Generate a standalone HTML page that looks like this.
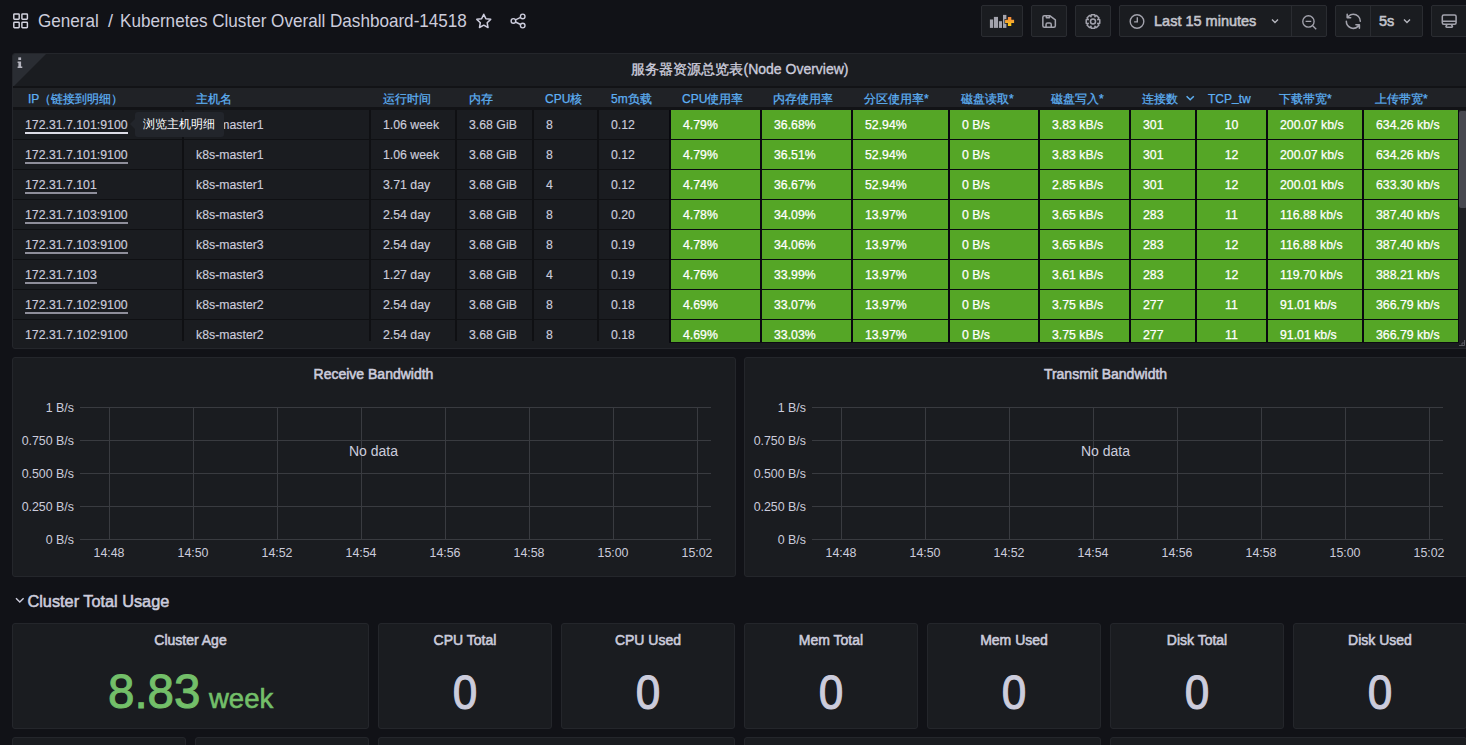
<!DOCTYPE html>
<html><head><meta charset="utf-8">
<style>
*{box-sizing:border-box;margin:0;padding:0}
html,body{width:1466px;height:745px;overflow:hidden;background:#111217;font-family:"Liberation Sans",sans-serif;color:#ccccdc}
.a{position:absolute}
.panel{position:absolute;background:#1a1c20;border:1px solid #24262b;border-radius:3px;overflow:hidden}
.t{position:absolute;white-space:nowrap;line-height:1}
.btn{position:absolute;top:5px;height:32px;background:#1a1c20;border:1px solid #2a2c31;border-radius:2px}
.cell{position:absolute;height:29px;white-space:nowrap;font-size:12.3px;line-height:30px;overflow:hidden;-webkit-text-stroke:0.15px currentColor}
.m{-webkit-text-stroke:0.55px currentColor}
.g{background:#55a626;color:#fff;-webkit-text-stroke:0.25px #fff}
.hd{position:absolute;top:0;height:19px;line-height:23px;font-size:12px;color:#5eb0f3;white-space:nowrap;font-weight:500;-webkit-text-stroke:0.25px #5eb0f3}
.ul{border-bottom:1px solid #ccccdc;}
.gl{position:absolute;background:#393b40}
.ax{position:absolute;font-size:12.4px;white-space:nowrap;line-height:1;color:#ccccdc}
</style></head><body>

<svg class="a" style="left:8px;top:8px" width="26" height="26" viewBox="0 0 26 26" fill="none" stroke="#d4d4e0" stroke-width="1.45">
<rect x="5.8" y="5.9" width="5.4" height="5.4" rx="0.7"/><rect x="13.9" y="5.9" width="5.5" height="5.4" rx="0.7"/>
<rect x="5.8" y="14.2" width="5.4" height="5.5" rx="0.7"/><rect x="13.9" y="14.2" width="5.5" height="5.5" rx="0.7"/></svg>
<div class="t" style="left:38px;top:11.6px;font-size:18.2px;transform:scaleX(0.94);transform-origin:0 0">General</div>
<div class="t" style="left:108px;top:11.6px;font-size:18.2px">/</div><div class="t" style="left:120px;top:11.6px;font-size:18.2px;transform:scaleX(0.94);transform-origin:0 0">Kubernetes Cluster Overall Dashboard-14518</div>
<svg class="a" style="left:470px;top:8px" width="30" height="26" viewBox="0 0 30 26" fill="none" stroke="#ccccdc" stroke-width="1.5" stroke-linejoin="round">
<path d="M13.75,6.30 L15.87,10.69 L20.69,11.34 L17.17,14.71 L18.04,19.51 L13.75,17.20 L9.46,19.51 L10.33,14.71 L6.81,11.34 L11.63,10.69Z"/></svg>
<svg class="a" style="left:505px;top:8px" width="24" height="24" viewBox="0 0 24 24" fill="none" stroke="#ccccdc" stroke-width="1.4">
<circle cx="17.7" cy="8.4" r="2.3"/><circle cx="8.4" cy="12.9" r="2.3"/><circle cx="17.7" cy="17.6" r="2.3"/>
<path d="M10.5 11.8l5.1-2.4M10.5 14l5.1 2.5"/></svg>

<div class="btn" style="left:981px;width:42px"></div>
<svg class="a" style="left:985px;top:10px" width="35" height="22" viewBox="0 0 35 22">
<defs><linearGradient id="pg" x1="0" y1="0" x2="0" y2="1"><stop offset="0" stop-color="#f8853a"/><stop offset="0.5" stop-color="#f3a530"/><stop offset="1" stop-color="#fdd20a"/></linearGradient></defs>
<g fill="#a3a3ad"><rect x="4.9" y="9.45" width="3.2" height="8.45"/><rect x="8.9" y="6.9" width="4.1" height="11"/><rect x="13.9" y="11.2" width="3.1" height="6.7"/><rect x="18" y="4.9" width="3.4" height="13"/></g>
<path d="M22.9 6.9h3.4v2.8h2.8v3.4h-2.8v3h-3.4v-3h-2.8V9.7h2.8z" fill="url(#pg)" stroke="#1a1c20" stroke-width="1.2" paint-order="stroke"/></svg>
<div class="btn" style="left:1031px;width:36px"></div>
<div class="btn" style="left:1075px;width:36px"></div>
<svg class="a" style="left:1035px;top:8px" width="72" height="26" viewBox="0 0 72 26" fill="none" stroke="#a3a3ad" stroke-width="1.5" stroke-linejoin="round">
<path d="M9.35 7.65H14.7L20.35 11.8V17.85Q20.35 19.35 18.85 19.35H9.35Q7.85 19.35 7.85 17.85V9.15Q7.85 7.65 9.35 7.65Z"/>
<path d="M11.35 7.65V9.85H14.45V7.65"/><path d="M11.05 19.35V16.45Q11.05 14.95 12.55 14.95H14.75Q16.25 14.95 16.25 16.45V19.35"/>
<path d="M62.75,11.38 L64.78,11.77 L64.78,15.23 L62.75,15.62 L62.86,15.36 L64.02,17.07 L61.57,19.52 L59.86,18.36 L60.12,18.25 L59.73,20.28 L56.27,20.28 L55.88,18.25 L56.14,18.36 L54.43,19.52 L51.98,17.07 L53.14,15.36 L53.25,15.62 L51.22,15.23 L51.22,11.77 L53.25,11.38 L53.14,11.64 L51.98,9.93 L54.43,7.48 L56.14,8.64 L55.88,8.75 L56.27,6.72 L59.73,6.72 L60.12,8.75 L59.86,8.64 L61.57,7.48 L64.02,9.93 L62.86,11.64Z"/>
<circle cx="58" cy="13.5" r="2.5"/></svg>
<div class="btn" style="left:1119px;width:208px"></div>
<div class="a" style="left:1291px;top:6px;width:1px;height:30px;background:#2a2c31"></div>
<svg class="a" style="left:1129px;top:13px" width="16" height="18" viewBox="0 0 16 18" fill="none" stroke="#a3a3ad" stroke-width="1.4">
<circle cx="8" cy="8.5" r="6.8"/><path d="M8.3 4.3V8.9H5.1"/></svg>
<div class="t m" style="left:1154px;top:14px;font-size:14.5px;color:#c3c4cc">Last 15 minutes</div>
<svg class="a" style="left:1270px;top:16px" width="10" height="10" viewBox="0 0 10 10" fill="none" stroke="#b5b6be" stroke-width="1.4"><path d="M2 3.5l3 3 3-3"/></svg>
<svg class="a" style="left:1301px;top:13.5px" width="17" height="17" viewBox="0 0 24 24" fill="none" stroke="#a3a3ad" stroke-width="1.9">
<circle cx="10.5" cy="10.5" r="8"/><path d="M6.5 10.5h8M16.5 16.5l5 5"/></svg>
<div class="btn" style="left:1335px;width:88px"></div>
<div class="a" style="left:1370px;top:6px;width:1px;height:30px;background:#2a2c31"></div>
<svg class="a" style="left:1343.5px;top:12.4px" width="18.6" height="18.6" viewBox="0 0 24 24" fill="#a3a3ad">
<path d="M19.91,15.51H15.38a1,1,0,0,0,0,2h2.4A8,8,0,0,1,4,12a1,1,0,0,0-2,0,10,10,0,0,0,16.88,7.23V21a1,1,0,0,0,2,0V16.5A1,1,0,0,0,19.91,15.51ZM12,2A10,10,0,0,0,5.12,4.77V3a1,1,0,0,0-2,0V7.5a1,1,0,0,0,1,1h4.5a1,1,0,0,0,0-2H6.22A8,8,0,0,1,20,12a1,1,0,0,0,2,0A10,10,0,0,0,12,2Z"/></svg>
<div class="t m" style="left:1379px;top:14px;font-size:14.5px;color:#c3c4cc">5s</div>
<svg class="a" style="left:1402px;top:16px" width="10" height="10" viewBox="0 0 10 10" fill="none" stroke="#b5b6be" stroke-width="1.4"><path d="M2 3.5l3 3 3-3"/></svg>
<div class="btn" style="left:1431px;width:50px"></div>
<svg class="a" style="left:1440.3px;top:11.6px" width="18.4" height="18.4" viewBox="0 0 24 24" fill="#a3a3ad">
<path d="M19,3H5A3,3,0,0,0,2,6v8a3,3,0,0,0,3,3H7.64l-.58,1a2,2,0,0,0,0,2,2,2,0,0,0,1.75,1h6.46A2,2,0,0,0,17,20a2,2,0,0,0,0-2l-.59-1H19a3,3,0,0,0,3-3V6A3,3,0,0,0,19,3ZM8.77,19,10,17H14l1.16,2ZM20,14a1,1,0,0,1-1,1H5a1,1,0,0,1-1-1V13H20Zm0-3H4V6A1,1,0,0,1,5,5H19a1,1,0,0,1,1,1Z"/></svg>

<div class="panel" style="left:12px;top:53px;width:1460px;height:296px">
<svg class="a" style="left:0;top:0" width="33" height="33"><path d="M0 0H33L0 33z" fill="#2a2d33"/></svg>
<svg class="a" style="left:0;top:0" width="20" height="20" viewBox="0 0 20 20" fill="#b4b4be"><rect x="5.3" y="3.4" width="2.8" height="2.6"/><path d="M4.6 7.4H8.1V12.4H9.3V14H4.6V12.4H5.4V9H4.6Z"/></svg>
<div class="t" style="left:0;width:1454px;top:8px;text-align:center;font-size:14px;-webkit-text-stroke:0.35px currentColor">服务器资源总览表(Node Overview)</div>

<div class="a" style="left:0;top:32px;width:1460px;height:2px;background:#121316"></div>
<div class="a" style="left:0;top:34px;width:1460px;height:19px;background:#202226"></div>
<div class="a" style="left:0;top:53px;width:1460px;height:3px;background:#121316"></div>
<div class="hd" style="left:15px;top:34px">IP（链接到明细）</div>
<div class="hd" style="left:183px;top:34px">主机名</div>
<div class="hd" style="left:370px;top:34px">运行时间</div>
<div class="hd" style="left:456px;top:34px">内存</div>
<div class="hd" style="left:532px;top:34px">CPU核</div>
<div class="hd" style="left:598px;top:34px">5m负载</div>
<div class="hd" style="left:669px;top:34px">CPU使用率</div>
<div class="hd" style="left:760px;top:34px">内存使用率</div>
<div class="hd" style="left:851px;top:34px">分区使用率*</div>
<div class="hd" style="left:948px;top:34px">磁盘读取*</div>
<div class="hd" style="left:1038px;top:34px">磁盘写入*</div>
<div class="hd" style="left:1129px;top:34px">连接数</div>
<div class="hd" style="left:1195px;top:34px">TCP<span style='position:relative;top:-2px'>_</span>tw</div>
<div class="hd" style="left:1266px;top:34px">下载带宽*</div>
<div class="hd" style="left:1362px;top:34px">上传带宽*</div>
<svg class="a" style="left:1171.5px;top:39px" width="10" height="10" viewBox="0 0 10 10" fill="none" stroke="#5eb0f3" stroke-width="1.5"><path d="M1.6 3.2l3.6 3.6 3.6-3.6"/></svg>
<div class="a" style="left:0;top:56px;width:1460px;height:233px;overflow:hidden;background:#0f1013">
<div class="a" style="left:656px;top:0;width:791px;height:233px;background:#09090f"></div>
<div class="cell" style="left:0px;top:0px;width:169px;background:#1a1c20;padding-left:12px;"><span style="border-bottom:2px solid #dcdce6;padding-bottom:0px">172.31.7.101:9100</span></div>
<div class="cell" style="left:171px;top:0px;width:185px;background:#1a1c20;padding-left:12px;">k8s-master1</div>
<div class="cell" style="left:358px;top:0px;width:84px;background:#1a1c20;padding-left:12px;">1.06 week</div>
<div class="cell" style="left:444px;top:0px;width:75px;background:#1a1c20;padding-left:12px;">3.68 GiB</div>
<div class="cell" style="left:521px;top:0px;width:63px;background:#1a1c20;padding-left:12px;">8</div>
<div class="cell" style="left:586px;top:0px;width:70px;background:#1a1c20;padding-left:12px;">0.12</div>
<div class="cell g" style="left:658px;top:0px;width:89px;padding-left:12px;">4.79%</div>
<div class="cell g" style="left:749px;top:0px;width:89px;padding-left:12px;">36.68%</div>
<div class="cell g" style="left:840px;top:0px;width:95px;padding-left:12px;">52.94%</div>
<div class="cell g" style="left:937px;top:0px;width:88px;padding-left:12px;">0 B/s</div>
<div class="cell g" style="left:1027px;top:0px;width:89px;padding-left:12px;">3.83 kB/s</div>
<div class="cell g" style="left:1118px;top:0px;width:64px;padding-left:12px;">301</div>
<div class="cell g" style="left:1184px;top:0px;width:69px;text-align:center;">10</div>
<div class="cell g" style="left:1255px;top:0px;width:94px;padding-left:12px;">200.07 kb/s</div>
<div class="cell g" style="left:1351px;top:0px;width:94px;padding-left:12px;">634.26 kb/s</div>
<div class="cell" style="left:0px;top:30px;width:169px;background:#1a1c20;padding-left:12px;"><span style="border-bottom:2px solid #8e8e9a;padding-bottom:0px">172.31.7.101:9100</span></div>
<div class="cell" style="left:171px;top:30px;width:185px;background:#1a1c20;padding-left:12px;">k8s-master1</div>
<div class="cell" style="left:358px;top:30px;width:84px;background:#1a1c20;padding-left:12px;">1.06 week</div>
<div class="cell" style="left:444px;top:30px;width:75px;background:#1a1c20;padding-left:12px;">3.68 GiB</div>
<div class="cell" style="left:521px;top:30px;width:63px;background:#1a1c20;padding-left:12px;">8</div>
<div class="cell" style="left:586px;top:30px;width:70px;background:#1a1c20;padding-left:12px;">0.12</div>
<div class="cell g" style="left:658px;top:30px;width:89px;padding-left:12px;">4.79%</div>
<div class="cell g" style="left:749px;top:30px;width:89px;padding-left:12px;">36.51%</div>
<div class="cell g" style="left:840px;top:30px;width:95px;padding-left:12px;">52.94%</div>
<div class="cell g" style="left:937px;top:30px;width:88px;padding-left:12px;">0 B/s</div>
<div class="cell g" style="left:1027px;top:30px;width:89px;padding-left:12px;">3.83 kB/s</div>
<div class="cell g" style="left:1118px;top:30px;width:64px;padding-left:12px;">301</div>
<div class="cell g" style="left:1184px;top:30px;width:69px;text-align:center;">12</div>
<div class="cell g" style="left:1255px;top:30px;width:94px;padding-left:12px;">200.07 kb/s</div>
<div class="cell g" style="left:1351px;top:30px;width:94px;padding-left:12px;">634.26 kb/s</div>
<div class="cell" style="left:0px;top:60px;width:169px;background:#1a1c20;padding-left:12px;"><span style="border-bottom:2px solid #8e8e9a;padding-bottom:0px">172.31.7.101</span></div>
<div class="cell" style="left:171px;top:60px;width:185px;background:#1a1c20;padding-left:12px;">k8s-master1</div>
<div class="cell" style="left:358px;top:60px;width:84px;background:#1a1c20;padding-left:12px;">3.71 day</div>
<div class="cell" style="left:444px;top:60px;width:75px;background:#1a1c20;padding-left:12px;">3.68 GiB</div>
<div class="cell" style="left:521px;top:60px;width:63px;background:#1a1c20;padding-left:12px;">4</div>
<div class="cell" style="left:586px;top:60px;width:70px;background:#1a1c20;padding-left:12px;">0.12</div>
<div class="cell g" style="left:658px;top:60px;width:89px;padding-left:12px;">4.74%</div>
<div class="cell g" style="left:749px;top:60px;width:89px;padding-left:12px;">36.67%</div>
<div class="cell g" style="left:840px;top:60px;width:95px;padding-left:12px;">52.94%</div>
<div class="cell g" style="left:937px;top:60px;width:88px;padding-left:12px;">0 B/s</div>
<div class="cell g" style="left:1027px;top:60px;width:89px;padding-left:12px;">2.85 kB/s</div>
<div class="cell g" style="left:1118px;top:60px;width:64px;padding-left:12px;">301</div>
<div class="cell g" style="left:1184px;top:60px;width:69px;text-align:center;">12</div>
<div class="cell g" style="left:1255px;top:60px;width:94px;padding-left:12px;">200.01 kb/s</div>
<div class="cell g" style="left:1351px;top:60px;width:94px;padding-left:12px;">633.30 kb/s</div>
<div class="cell" style="left:0px;top:90px;width:169px;background:#1a1c20;padding-left:12px;"><span style="border-bottom:2px solid #8e8e9a;padding-bottom:0px">172.31.7.103:9100</span></div>
<div class="cell" style="left:171px;top:90px;width:185px;background:#1a1c20;padding-left:12px;">k8s-master3</div>
<div class="cell" style="left:358px;top:90px;width:84px;background:#1a1c20;padding-left:12px;">2.54 day</div>
<div class="cell" style="left:444px;top:90px;width:75px;background:#1a1c20;padding-left:12px;">3.68 GiB</div>
<div class="cell" style="left:521px;top:90px;width:63px;background:#1a1c20;padding-left:12px;">8</div>
<div class="cell" style="left:586px;top:90px;width:70px;background:#1a1c20;padding-left:12px;">0.20</div>
<div class="cell g" style="left:658px;top:90px;width:89px;padding-left:12px;">4.78%</div>
<div class="cell g" style="left:749px;top:90px;width:89px;padding-left:12px;">34.09%</div>
<div class="cell g" style="left:840px;top:90px;width:95px;padding-left:12px;">13.97%</div>
<div class="cell g" style="left:937px;top:90px;width:88px;padding-left:12px;">0 B/s</div>
<div class="cell g" style="left:1027px;top:90px;width:89px;padding-left:12px;">3.65 kB/s</div>
<div class="cell g" style="left:1118px;top:90px;width:64px;padding-left:12px;">283</div>
<div class="cell g" style="left:1184px;top:90px;width:69px;text-align:center;">11</div>
<div class="cell g" style="left:1255px;top:90px;width:94px;padding-left:12px;">116.88 kb/s</div>
<div class="cell g" style="left:1351px;top:90px;width:94px;padding-left:12px;">387.40 kb/s</div>
<div class="cell" style="left:0px;top:120px;width:169px;background:#1a1c20;padding-left:12px;"><span style="border-bottom:2px solid #8e8e9a;padding-bottom:0px">172.31.7.103:9100</span></div>
<div class="cell" style="left:171px;top:120px;width:185px;background:#1a1c20;padding-left:12px;">k8s-master3</div>
<div class="cell" style="left:358px;top:120px;width:84px;background:#1a1c20;padding-left:12px;">2.54 day</div>
<div class="cell" style="left:444px;top:120px;width:75px;background:#1a1c20;padding-left:12px;">3.68 GiB</div>
<div class="cell" style="left:521px;top:120px;width:63px;background:#1a1c20;padding-left:12px;">8</div>
<div class="cell" style="left:586px;top:120px;width:70px;background:#1a1c20;padding-left:12px;">0.19</div>
<div class="cell g" style="left:658px;top:120px;width:89px;padding-left:12px;">4.78%</div>
<div class="cell g" style="left:749px;top:120px;width:89px;padding-left:12px;">34.06%</div>
<div class="cell g" style="left:840px;top:120px;width:95px;padding-left:12px;">13.97%</div>
<div class="cell g" style="left:937px;top:120px;width:88px;padding-left:12px;">0 B/s</div>
<div class="cell g" style="left:1027px;top:120px;width:89px;padding-left:12px;">3.65 kB/s</div>
<div class="cell g" style="left:1118px;top:120px;width:64px;padding-left:12px;">283</div>
<div class="cell g" style="left:1184px;top:120px;width:69px;text-align:center;">12</div>
<div class="cell g" style="left:1255px;top:120px;width:94px;padding-left:12px;">116.88 kb/s</div>
<div class="cell g" style="left:1351px;top:120px;width:94px;padding-left:12px;">387.40 kb/s</div>
<div class="cell" style="left:0px;top:150px;width:169px;background:#1a1c20;padding-left:12px;"><span style="border-bottom:2px solid #8e8e9a;padding-bottom:0px">172.31.7.103</span></div>
<div class="cell" style="left:171px;top:150px;width:185px;background:#1a1c20;padding-left:12px;">k8s-master3</div>
<div class="cell" style="left:358px;top:150px;width:84px;background:#1a1c20;padding-left:12px;">1.27 day</div>
<div class="cell" style="left:444px;top:150px;width:75px;background:#1a1c20;padding-left:12px;">3.68 GiB</div>
<div class="cell" style="left:521px;top:150px;width:63px;background:#1a1c20;padding-left:12px;">4</div>
<div class="cell" style="left:586px;top:150px;width:70px;background:#1a1c20;padding-left:12px;">0.19</div>
<div class="cell g" style="left:658px;top:150px;width:89px;padding-left:12px;">4.76%</div>
<div class="cell g" style="left:749px;top:150px;width:89px;padding-left:12px;">33.99%</div>
<div class="cell g" style="left:840px;top:150px;width:95px;padding-left:12px;">13.97%</div>
<div class="cell g" style="left:937px;top:150px;width:88px;padding-left:12px;">0 B/s</div>
<div class="cell g" style="left:1027px;top:150px;width:89px;padding-left:12px;">3.61 kB/s</div>
<div class="cell g" style="left:1118px;top:150px;width:64px;padding-left:12px;">283</div>
<div class="cell g" style="left:1184px;top:150px;width:69px;text-align:center;">12</div>
<div class="cell g" style="left:1255px;top:150px;width:94px;padding-left:12px;">119.70 kb/s</div>
<div class="cell g" style="left:1351px;top:150px;width:94px;padding-left:12px;">388.21 kb/s</div>
<div class="cell" style="left:0px;top:180px;width:169px;background:#1a1c20;padding-left:12px;"><span style="border-bottom:2px solid #8e8e9a;padding-bottom:0px">172.31.7.102:9100</span></div>
<div class="cell" style="left:171px;top:180px;width:185px;background:#1a1c20;padding-left:12px;">k8s-master2</div>
<div class="cell" style="left:358px;top:180px;width:84px;background:#1a1c20;padding-left:12px;">2.54 day</div>
<div class="cell" style="left:444px;top:180px;width:75px;background:#1a1c20;padding-left:12px;">3.68 GiB</div>
<div class="cell" style="left:521px;top:180px;width:63px;background:#1a1c20;padding-left:12px;">8</div>
<div class="cell" style="left:586px;top:180px;width:70px;background:#1a1c20;padding-left:12px;">0.18</div>
<div class="cell g" style="left:658px;top:180px;width:89px;padding-left:12px;">4.69%</div>
<div class="cell g" style="left:749px;top:180px;width:89px;padding-left:12px;">33.07%</div>
<div class="cell g" style="left:840px;top:180px;width:95px;padding-left:12px;">13.97%</div>
<div class="cell g" style="left:937px;top:180px;width:88px;padding-left:12px;">0 B/s</div>
<div class="cell g" style="left:1027px;top:180px;width:89px;padding-left:12px;">3.75 kB/s</div>
<div class="cell g" style="left:1118px;top:180px;width:64px;padding-left:12px;">277</div>
<div class="cell g" style="left:1184px;top:180px;width:69px;text-align:center;">11</div>
<div class="cell g" style="left:1255px;top:180px;width:94px;padding-left:12px;">91.01 kb/s</div>
<div class="cell g" style="left:1351px;top:180px;width:94px;padding-left:12px;">366.79 kb/s</div>
<div class="cell" style="left:0px;top:210px;width:169px;background:#1a1c20;padding-left:12px;">172.31.7.102:9100</div>
<div class="cell" style="left:171px;top:210px;width:185px;background:#1a1c20;padding-left:12px;">k8s-master2</div>
<div class="cell" style="left:358px;top:210px;width:84px;background:#1a1c20;padding-left:12px;">2.54 day</div>
<div class="cell" style="left:444px;top:210px;width:75px;background:#1a1c20;padding-left:12px;">3.68 GiB</div>
<div class="cell" style="left:521px;top:210px;width:63px;background:#1a1c20;padding-left:12px;">8</div>
<div class="cell" style="left:586px;top:210px;width:70px;background:#1a1c20;padding-left:12px;">0.18</div>
<div class="cell g" style="left:658px;top:210px;width:89px;padding-left:12px;">4.69%</div>
<div class="cell g" style="left:749px;top:210px;width:89px;padding-left:12px;">33.03%</div>
<div class="cell g" style="left:840px;top:210px;width:95px;padding-left:12px;">13.97%</div>
<div class="cell g" style="left:937px;top:210px;width:88px;padding-left:12px;">0 B/s</div>
<div class="cell g" style="left:1027px;top:210px;width:89px;padding-left:12px;">3.75 kB/s</div>
<div class="cell g" style="left:1118px;top:210px;width:64px;padding-left:12px;">277</div>
<div class="cell g" style="left:1184px;top:210px;width:69px;text-align:center;">11</div>
<div class="cell g" style="left:1255px;top:210px;width:94px;padding-left:12px;">91.01 kb/s</div>
<div class="cell g" style="left:1351px;top:210px;width:94px;padding-left:12px;">366.79 kb/s</div>
<div class="a" style="left:0;top:231px;width:656px;height:2px;background:#1a1c20"></div>
<div class="a" style="left:656px;top:232px;width:791px;height:1px;background:#0c0c12"></div>
</div>
<div class="a" style="left:1446px;top:56px;width:10px;height:233px;background:#1e1f23"></div>
<div class="a" style="left:1446px;top:57px;width:8px;height:97px;background:#47484f;border-radius:2px"></div>
<svg class="a" style="left:1443px;top:283px" width="10" height="10" viewBox="0 0 10 10" fill="none" stroke="#5a5b62" stroke-width="1"><path d="M3 8.5H8.5V3M6 8.5V6H8.5"/></svg>
</div>
<div class="a" style="left:135px;top:112px;width:89px;height:25px;background:#22252b;border-radius:3px"></div>
<div class="a" style="left:130px;top:119px;width:0;height:0;border-top:5px solid transparent;border-bottom:5px solid transparent;border-right:5px solid #22252b"></div>
<div class="t" style="left:143px;top:118px;font-size:12px;color:#ffffff">浏览主机明细</div>

<div class="panel" style="left:12px;top:357px;width:724px;height:220px"></div>
<div class="t m" style="left:12px;width:723px;top:367px;text-align:center;font-size:14px">Receive Bandwidth</div>
<div class="gl" style="left:80px;top:407px;width:631px;height:1px"></div>
<div class="ax" style="left:-88px;width:162px;text-align:right;top:401.5px">1 B/s</div>
<div class="gl" style="left:80px;top:440px;width:631px;height:1px"></div>
<div class="ax" style="left:-88px;width:162px;text-align:right;top:434.5px">0.750 B/s</div>
<div class="gl" style="left:80px;top:473px;width:631px;height:1px"></div>
<div class="ax" style="left:-88px;width:162px;text-align:right;top:467.5px">0.500 B/s</div>
<div class="gl" style="left:80px;top:506px;width:631px;height:1px"></div>
<div class="ax" style="left:-88px;width:162px;text-align:right;top:500.5px">0.250 B/s</div>
<div class="gl" style="left:80px;top:539px;width:631px;height:1px"></div>
<div class="ax" style="left:-88px;width:162px;text-align:right;top:533.5px">0 B/s</div>
<div class="gl" style="left:109px;top:407px;width:1px;height:133px"></div>
<div class="ax" style="left:69px;width:80px;text-align:center;top:547px">14:48</div>
<div class="gl" style="left:193px;top:407px;width:1px;height:133px"></div>
<div class="ax" style="left:153px;width:80px;text-align:center;top:547px">14:50</div>
<div class="gl" style="left:277px;top:407px;width:1px;height:133px"></div>
<div class="ax" style="left:237px;width:80px;text-align:center;top:547px">14:52</div>
<div class="gl" style="left:361px;top:407px;width:1px;height:133px"></div>
<div class="ax" style="left:321px;width:80px;text-align:center;top:547px">14:54</div>
<div class="gl" style="left:445px;top:407px;width:1px;height:133px"></div>
<div class="ax" style="left:405px;width:80px;text-align:center;top:547px">14:56</div>
<div class="gl" style="left:529px;top:407px;width:1px;height:133px"></div>
<div class="ax" style="left:489px;width:80px;text-align:center;top:547px">14:58</div>
<div class="gl" style="left:613px;top:407px;width:1px;height:133px"></div>
<div class="ax" style="left:573px;width:80px;text-align:center;top:547px">15:00</div>
<div class="gl" style="left:697px;top:407px;width:1px;height:133px"></div>
<div class="ax" style="left:657px;width:80px;text-align:center;top:547px">15:02</div>
<div class="t" style="left:12px;width:723px;top:444px;text-align:center;font-size:14px">No data</div>
<div class="panel" style="left:744px;top:357px;width:724px;height:220px"></div>
<div class="t m" style="left:744px;width:723px;top:367px;text-align:center;font-size:14px">Transmit Bandwidth</div>
<div class="gl" style="left:812px;top:407px;width:631px;height:1px"></div>
<div class="ax" style="left:644px;width:162px;text-align:right;top:401.5px">1 B/s</div>
<div class="gl" style="left:812px;top:440px;width:631px;height:1px"></div>
<div class="ax" style="left:644px;width:162px;text-align:right;top:434.5px">0.750 B/s</div>
<div class="gl" style="left:812px;top:473px;width:631px;height:1px"></div>
<div class="ax" style="left:644px;width:162px;text-align:right;top:467.5px">0.500 B/s</div>
<div class="gl" style="left:812px;top:506px;width:631px;height:1px"></div>
<div class="ax" style="left:644px;width:162px;text-align:right;top:500.5px">0.250 B/s</div>
<div class="gl" style="left:812px;top:539px;width:631px;height:1px"></div>
<div class="ax" style="left:644px;width:162px;text-align:right;top:533.5px">0 B/s</div>
<div class="gl" style="left:841px;top:407px;width:1px;height:133px"></div>
<div class="ax" style="left:801px;width:80px;text-align:center;top:547px">14:48</div>
<div class="gl" style="left:925px;top:407px;width:1px;height:133px"></div>
<div class="ax" style="left:885px;width:80px;text-align:center;top:547px">14:50</div>
<div class="gl" style="left:1009px;top:407px;width:1px;height:133px"></div>
<div class="ax" style="left:969px;width:80px;text-align:center;top:547px">14:52</div>
<div class="gl" style="left:1093px;top:407px;width:1px;height:133px"></div>
<div class="ax" style="left:1053px;width:80px;text-align:center;top:547px">14:54</div>
<div class="gl" style="left:1177px;top:407px;width:1px;height:133px"></div>
<div class="ax" style="left:1137px;width:80px;text-align:center;top:547px">14:56</div>
<div class="gl" style="left:1261px;top:407px;width:1px;height:133px"></div>
<div class="ax" style="left:1221px;width:80px;text-align:center;top:547px">14:58</div>
<div class="gl" style="left:1345px;top:407px;width:1px;height:133px"></div>
<div class="ax" style="left:1305px;width:80px;text-align:center;top:547px">15:00</div>
<div class="gl" style="left:1429px;top:407px;width:1px;height:133px"></div>
<div class="ax" style="left:1389px;width:80px;text-align:center;top:547px">15:02</div>
<div class="t" style="left:744px;width:723px;top:444px;text-align:center;font-size:14px">No data</div>
<svg class="a" style="left:15px;top:596px" width="10" height="8" viewBox="0 0 10 8" fill="none" stroke="#ccccdc" stroke-width="1.4"><path d="M1 2.2l3.8 3.8L8.6 2.2"/></svg>
<div class="t m" style="left:27.5px;top:592.5px;font-size:16.3px">Cluster Total Usage</div>

<div class="panel" style="left:12px;top:623px;width:357px;height:106px"></div>
<div class="t" style="left:12px;width:357px;top:633px;text-align:center;font-size:14px;-webkit-text-stroke:0.55px currentColor">Cluster Age</div>
<div class="t" style="left:108px;top:668px;font-size:47.5px;color:#73bf69;-webkit-text-stroke:1px #73bf69">8.83</div>
<div class="t" style="left:209px;top:685px;font-size:27.5px;color:#73bf69;-webkit-text-stroke:0.6px #73bf69">week</div>
<div class="panel" style="left:378px;top:623px;width:174px;height:106px"></div>
<div class="t" style="left:378px;width:174px;top:633px;text-align:center;font-size:14px;-webkit-text-stroke:0.55px currentColor">CPU Total</div>
<div class="t" style="left:378px;width:174px;top:668px;text-align:center;font-size:49px;-webkit-text-stroke:1.1px #ccccdc;transform:scaleX(0.9)">0</div>
<div class="panel" style="left:561px;top:623px;width:174px;height:106px"></div>
<div class="t" style="left:561px;width:174px;top:633px;text-align:center;font-size:14px;-webkit-text-stroke:0.55px currentColor">CPU Used</div>
<div class="t" style="left:561px;width:174px;top:668px;text-align:center;font-size:49px;-webkit-text-stroke:1.1px #ccccdc;transform:scaleX(0.9)">0</div>
<div class="panel" style="left:744px;top:623px;width:174px;height:106px"></div>
<div class="t" style="left:744px;width:174px;top:633px;text-align:center;font-size:14px;-webkit-text-stroke:0.55px currentColor">Mem Total</div>
<div class="t" style="left:744px;width:174px;top:668px;text-align:center;font-size:49px;-webkit-text-stroke:1.1px #ccccdc;transform:scaleX(0.9)">0</div>
<div class="panel" style="left:927px;top:623px;width:174px;height:106px"></div>
<div class="t" style="left:927px;width:174px;top:633px;text-align:center;font-size:14px;-webkit-text-stroke:0.55px currentColor">Mem Used</div>
<div class="t" style="left:927px;width:174px;top:668px;text-align:center;font-size:49px;-webkit-text-stroke:1.1px #ccccdc;transform:scaleX(0.9)">0</div>
<div class="panel" style="left:1110px;top:623px;width:174px;height:106px"></div>
<div class="t" style="left:1110px;width:174px;top:633px;text-align:center;font-size:14px;-webkit-text-stroke:0.55px currentColor">Disk Total</div>
<div class="t" style="left:1110px;width:174px;top:668px;text-align:center;font-size:49px;-webkit-text-stroke:1.1px #ccccdc;transform:scaleX(0.9)">0</div>
<div class="panel" style="left:1293px;top:623px;width:174px;height:106px"></div>
<div class="t" style="left:1293px;width:174px;top:633px;text-align:center;font-size:14px;-webkit-text-stroke:0.55px currentColor">Disk Used</div>
<div class="t" style="left:1293px;width:174px;top:668px;text-align:center;font-size:49px;-webkit-text-stroke:1.1px #ccccdc;transform:scaleX(0.9)">0</div>
<div class="panel" style="left:12px;top:737px;width:174px;height:40px"></div>
<div class="panel" style="left:195px;top:737px;width:174px;height:40px"></div>
<div class="panel" style="left:378px;top:737px;width:357px;height:40px"></div>
<div class="panel" style="left:744px;top:737px;width:357px;height:40px"></div>
<div class="panel" style="left:1110px;top:737px;width:357px;height:40px"></div>
</body></html>
